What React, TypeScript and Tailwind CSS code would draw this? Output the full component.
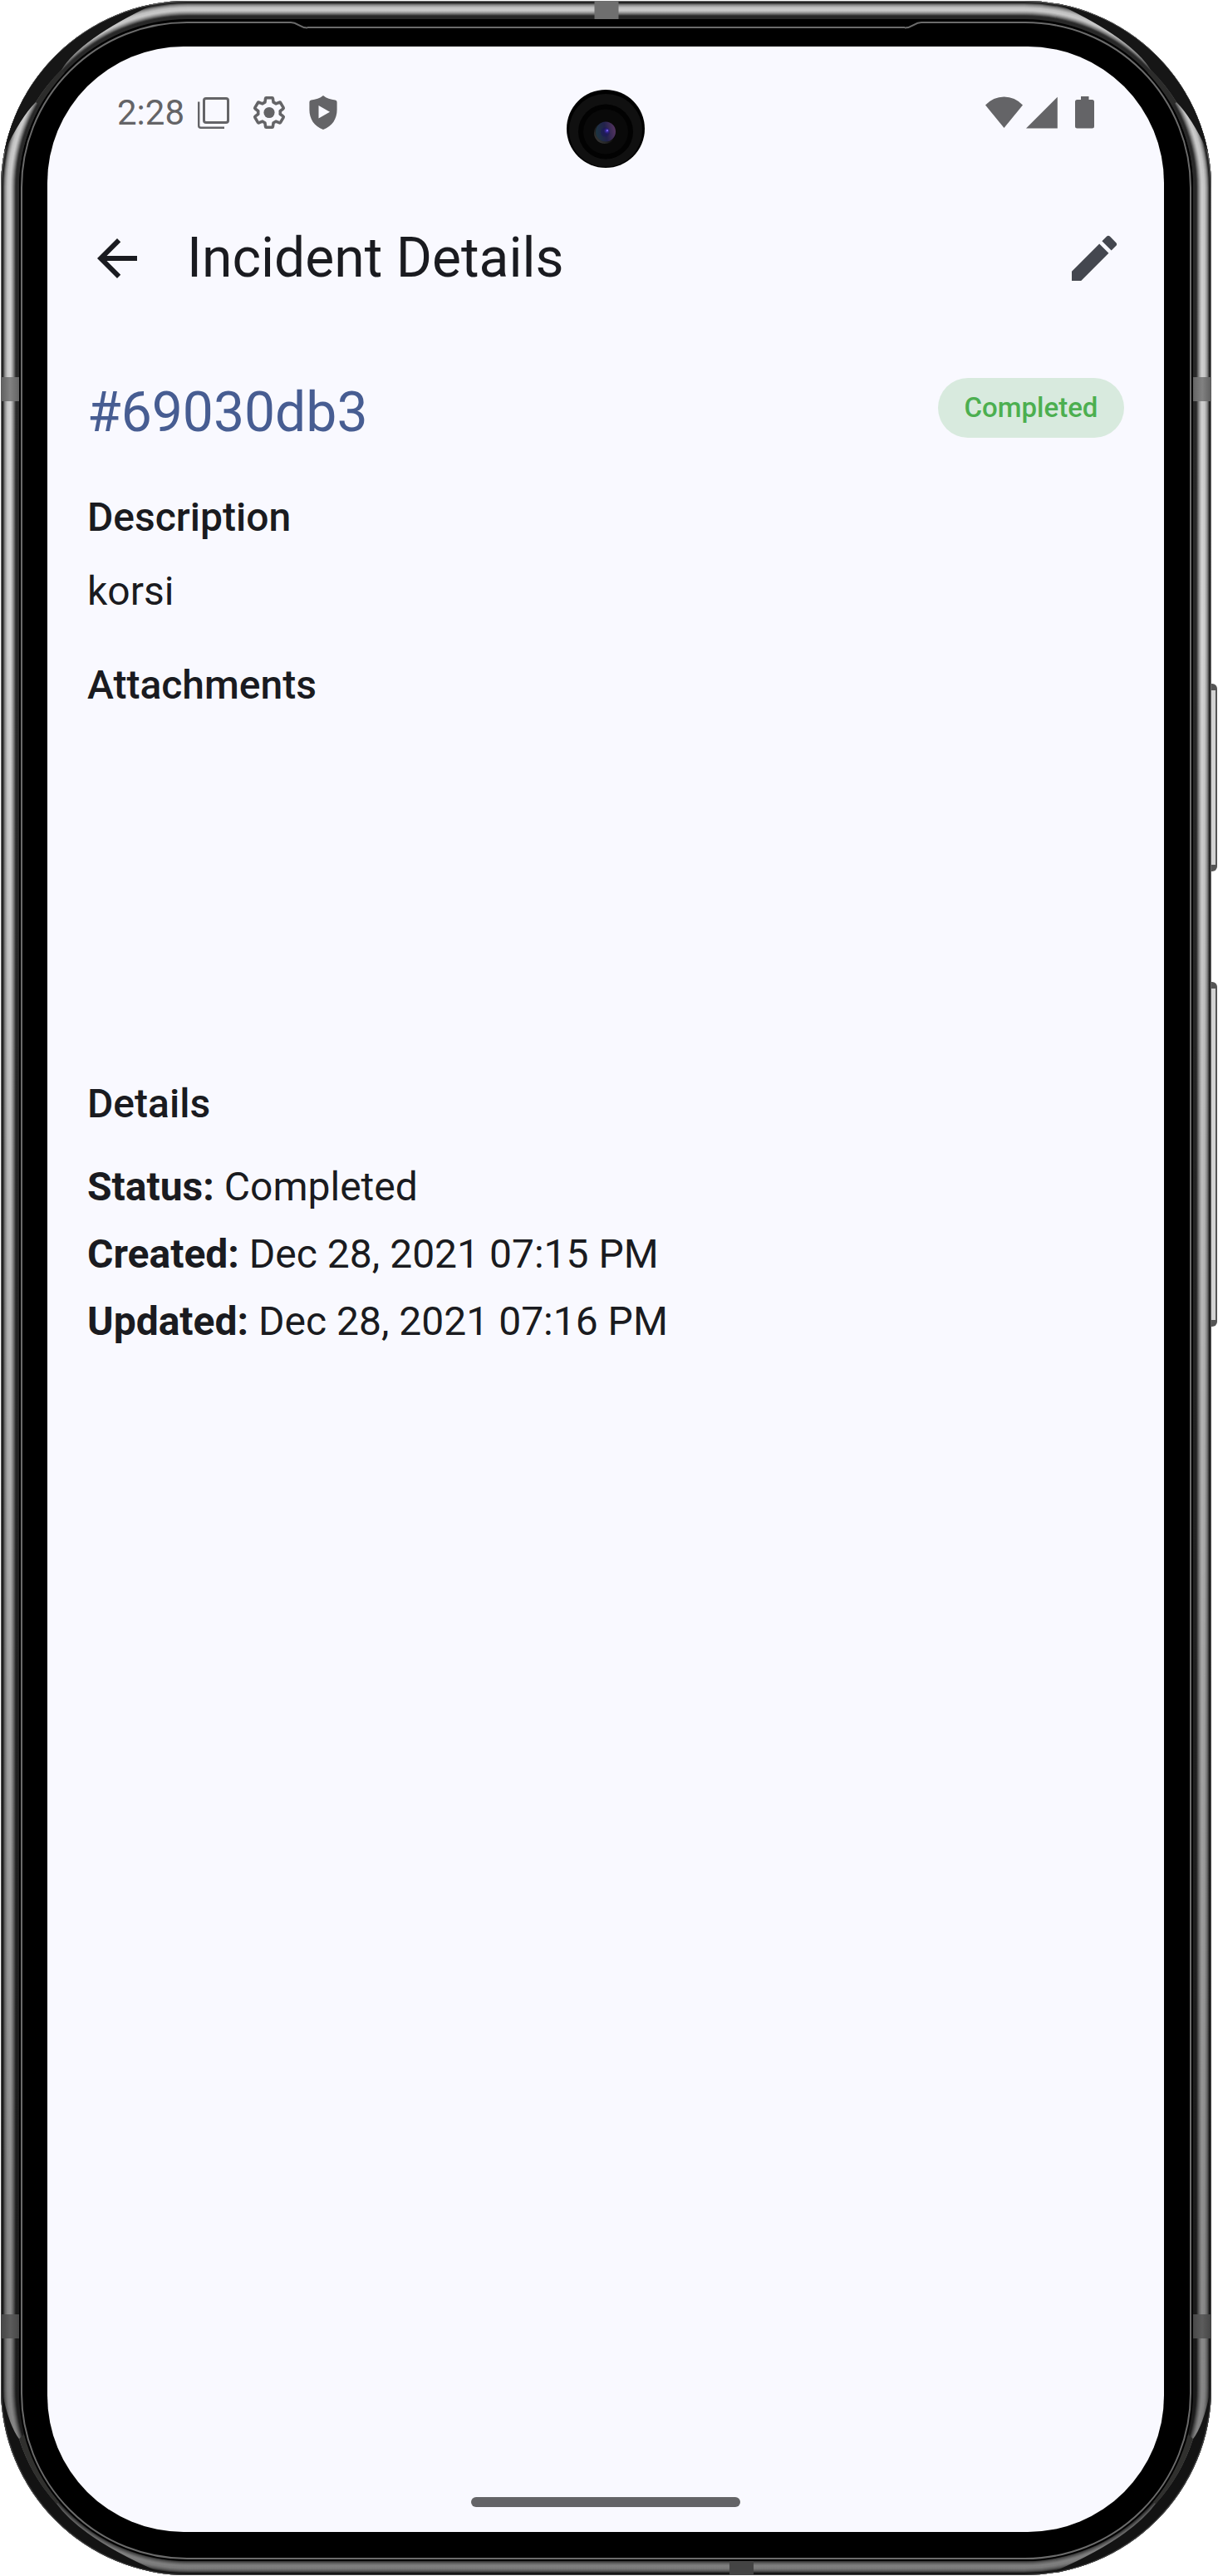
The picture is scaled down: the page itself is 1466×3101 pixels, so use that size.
import type { ReactNode } from "react";
import { MdArrowBack, MdEdit } from "react-icons/md";

const details = [
  { label: "Status:", value: "Completed" },
  { label: "Created:", value: "Dec 28, 2021 07:15 PM" },
  { label: "Updated:", value: "Dec 28, 2021 07:16 PM" },
];

function StackIcon() {
  return (
    <svg className="h-[38px] w-[38px]" viewBox="0 0 38 38" fill="none" stroke="currentColor" aria-hidden="true">
      <rect x="7.5" y="1.5" width="29" height="29" rx="2.5" strokeWidth="3" />
      <path d="M1.2 5.5V34.2Q1.2 36.8 3.8 36.8H32" strokeWidth="2.4" />
    </svg>
  );
}

function GearIcon() {
  return (
    <svg className="h-[39px] w-10" viewBox="1.2 1 21.6 22" fill="none" aria-hidden="true">
      <path
        stroke="currentColor"
        strokeWidth="2"
        strokeLinejoin="round"
        d="M19.43 12.98c.04-.32.07-.64.07-.98 0-.34-.03-.66-.07-.98l2.11-1.65c.19-.15.24-.42.12-.64l-2-3.46c-.09-.16-.26-.25-.44-.25-.06 0-.12.01-.17.03l-2.49 1c-.52-.4-1.08-.73-1.69-.98l-.38-2.65C14.46 2.18 14.25 2 14 2h-4c-.25 0-.46.18-.49.42l-.38 2.65c-.61.25-1.17.59-1.69.98l-2.49-1c-.06-.02-.12-.03-.18-.03-.17 0-.34.09-.43.25l-2 3.46c-.13.22-.07.49.12.64l2.11 1.65c-.04.32-.07.65-.07.98 0 .33.03.66.07.98l-2.11 1.65c-.19.15-.24.42-.12.64l2 3.46c.09.16.26.25.44.25.06 0 .12-.01.17-.03l2.49-1c.52.4 1.08.73 1.69.98l.38 2.65c.03.24.24.42.49.42h4c.25 0 .46-.18.49-.42l.38-2.65c.61-.25 1.17-.59 1.69-.98l2.49 1c.06.02.12.03.18.03.17 0 .34-.09.43-.25l2-3.46c.12-.22.07-.49-.12-.64l-2.11-1.65z"
      />
      <circle cx="12" cy="12" r="3.7" fill="currentColor" />
    </svg>
  );
}

function ShieldIcon() {
  return (
    <svg className="h-[41px] w-[34px]" viewBox="0 0 34 41" aria-hidden="true">
      <path
        fill="currentColor"
        fillRule="evenodd"
        d="M17 0C21 3.2 26 5 31.5 5.4Q33.6 5.8 33.6 8V17C33.6 28 28 37 17 41C6 37 .4 28 .4 17V8Q.4 5.8 2.5 5.4C8 5 13 3.2 17 0ZM11.5 12V27.5L25 19.7Z"
      />
    </svg>
  );
}

function StatusGlyphs() {
  return (
    <svg className="h-[39px] w-[131px]" viewBox="0 0 131 39" fill="currentColor" aria-hidden="true">
      <path d="M0 10.5Q9.5 .5 22.5 .5T45 10.5L22.5 38Z" />
      <path d="M49 38.5L86.8 .8V38.5Z" />
      <path d="M115 0H124.5V4H128.5Q131 4 131 6.5V36Q131 38.5 128.5 38.5H110.5Q108 38.5 108 36V6.5Q108 4 110.5 4H115Z" />
    </svg>
  );
}

function Camera() {
  return (
    <svg
      className="absolute left-1/2 top-[52px] h-[94px] w-[94px] -translate-x-1/2"
      viewBox="0 0 94 94"
      aria-hidden="true"
    >
      <defs>
        <linearGradient id="lens" x1="0" y1=".6" x2="1" y2=".4">
          <stop offset="0" stopColor="#1c3640" />
          <stop offset=".5" stopColor="#22224c" />
          <stop offset="1" stopColor="#553460" />
        </linearGradient>
        <radialGradient id="glow">
          <stop offset="0" stopColor="#5a3fe0" />
          <stop offset="1" stopColor="#2a1a9a" stopOpacity="0" />
        </radialGradient>
        <linearGradient id="rim" x1="1" y1="0" x2="0" y2="1">
          <stop offset=".4" stopColor="#050505" />
          <stop offset="1" stopColor="#444" />
        </linearGradient>
      </defs>
      <circle cx="47" cy="47" r="47" fill="#000" />
      <circle cx="47" cy="49" r="44" fill="#101010" />
      <circle cx="47" cy="50.5" r="33" fill="#020202" />
      <circle cx="47" cy="50.5" r="27" fill="#090909" />
      <circle cx="46" cy="52" r="13" fill="url(#rim)" />
      <circle cx="47" cy="50.5" r="12" fill="url(#lens)" />
      <circle cx="46.5" cy="51" r="5.5" fill="#1b1560" opacity=".45" />
      <circle cx="48.5" cy="49.5" r="4" fill="url(#glow)" />
      <circle cx="49" cy="49" r="1" fill="#7f6bf0" />
    </svg>
  );
}

function CornerTop({ className }: { className: string }) {
  return (
    <svg className={className} viewBox="0 0 226 226" aria-hidden="true">
      <path d="M4 182Q24 140 42 122A208 208 0 0 1 73 83Q96 46 182 5A225 225 0 0 0 4 182Z" fill="#161616" />
      <path d="M42 122A208 208 0 0 1 73 83L78 88A202 202 0 0 0 47 126Z" fill="#2c2c2b" />
    </svg>
  );
}

function CornerBottom({ className }: { className: string }) {
  return (
    <svg className={className} viewBox="0 0 226 226" aria-hidden="true">
      <path d="M2 218Q10 180 22 164A210 210 0 0 1 67 86Q98 44 190 4A225 225 0 0 0 2 218Z" fill="#131313" />
      <path d="M22 164A210 210 0 0 1 67 86L73 90A202 202 0 0 0 28 170Z" fill="#30302e" />
    </svg>
  );
}

function SpeakerSlot() {
  return (
    <div className="absolute inset-x-[323px] -top-0.5 flex h-[10px]" aria-hidden="true">
      <svg className="h-[10px] w-5" viewBox="0 0 20 10">
        <rect width="20" height="10" fill="#000" />
        <path d="M0 1C9 1 10 7.5 20 7.5" fill="none" stroke="#6b6b6b" strokeWidth="2" />
      </svg>
      <div className="flex flex-1 flex-col justify-end bg-black pb-0.5">
        <div className="h-0.5 bg-[#6b6b6b]" />
      </div>
      <svg className="h-[10px] w-5 -scale-x-100" viewBox="0 0 20 10">
        <rect width="20" height="10" fill="#000" />
        <path d="M0 1C9 1 10 7.5 20 7.5" fill="none" stroke="#6b6b6b" strokeWidth="2" />
      </svg>
    </div>
  );
}

function DeviceFrame({ children }: { children: ReactNode }) {
  return (
    <div className="relative mr-2 ml-px flex flex-1 flex-col rounded-[225px] bg-black px-6 pt-[25px] pb-[19px] shadow-[inset_0_0_0_1px_#6b6b6b,inset_0_0_0_3px_#262626,inset_0_0_0_4px_#555,inset_0_0_0_5px_#7c7c7c,inset_0_0_0_6px_#989898,inset_0_0_0_7px_#adadad,inset_0_0_0_8px_#bebebe,inset_0_0_0_10px_#cdcdcd,inset_0_0_0_12px_#d2d2d2,inset_0_0_0_13px_#c4c4c4,inset_0_0_0_14px_#b0b0b0,inset_0_0_0_15px_#989898,inset_0_0_0_16px_#7c7c7c,inset_0_0_0_17px_#5e5e5e,inset_0_0_0_18px_#3c3c3c,inset_0_0_0_22px_#2a2a2a]">
      <div
        className="absolute inset-0 rounded-[225px] bg-linear-to-b from-black/5 from-0% via-transparent via-25% to-black/40 to-100%"
        aria-hidden="true"
      />
      <CornerTop className="absolute left-0 top-0 h-[226px] w-[226px]" />
      <CornerTop className="absolute right-0 top-0 h-[226px] w-[226px] -scale-x-100" />
      <CornerBottom className="absolute bottom-0 left-0 h-[226px] w-[226px] -scale-y-100" />
      <CornerBottom className="absolute bottom-0 right-0 h-[226px] w-[226px] -scale-100" />

      <div className="absolute left-1/2 top-0 h-[22px] w-[29px] -translate-x-1/2 bg-[#6f6f6f]" />
      <div className="absolute left-0 top-[453px] h-[29px] w-[22px] bg-linear-to-r from-[#5e5e5e] via-[#828282] to-[#646464]" />
      <div className="absolute right-0 top-[453px] h-[29px] w-[22px] bg-linear-to-l from-[#5e5e5e] via-[#828282] to-[#646464]" />
      <div className="absolute bottom-[285px] left-0 h-[29px] w-[22px] bg-linear-to-r from-[#444] via-[#5c5c5c] to-[#484848]" />
      <div className="absolute bottom-[285px] right-0 h-[29px] w-[22px] bg-linear-to-l from-[#444] via-[#5c5c5c] to-[#484848]" />
      <div className="absolute bottom-0 left-[877px] h-[17px] w-[29px] bg-[#444]" />

      <div className="absolute left-full top-[822px] h-[226px] w-[7px] rounded-r-md border-y-8 border-r-2 border-[#555] bg-[#d3d3d3]" />
      <div className="absolute left-full top-[1181px] h-[415px] w-[7px] rounded-r-md border-y-8 border-r-2 border-[#555] bg-[#d3d3d3]" />

      <div className="relative flex flex-1 flex-col rounded-[200px] border-2 border-[#6b6b6b] bg-black pt-7 pr-[31px] pb-[31px] pl-[30px] shadow-[0_0_0_2px_#000]">
        <SpeakerSlot />
        {children}
      </div>
    </div>
  );
}

export default function App() {
  return (
    <div className="flex min-h-screen flex-col bg-white py-px font-[Roboto,sans-serif] text-[#1a1b20]">
      <DeviceFrame>
        <div className="relative flex flex-1 flex-col rounded-[164px] bg-[#f9f9ff]">
          <div className="flex h-[159px] items-center justify-between px-21 text-[#646467]">
            <div className="flex items-center gap-7">
              <div className="flex items-center gap-4">
                <time className="text-[42px] leading-none">2:28</time>
                <StackIcon />
              </div>
              <GearIcon />
              <ShieldIcon />
            </div>
            <StatusGlyphs />
          </div>
          <Camera />

          <header className="flex h-48 items-center gap-12 px-12">
            <button type="button" aria-label="Back">
              <MdArrowBack className="h-18 w-18" />
            </button>
            <h1 className="flex-1 text-[66px] leading-[84px]">Incident Details</h1>
            <button type="button" aria-label="Edit incident" className="text-[#44474f]">
              <MdEdit className="h-18 w-18" />
            </button>
          </header>

          <main className="flex flex-1 flex-col px-12 pt-12 text-[48px] leading-[72px]">
            <div className="flex items-start justify-between">
              <h2 className="text-[66px] leading-[84px] text-[#475d92]">#69030db3</h2>
              <span className="min-w-56 rounded-full bg-[#d8eade] px-6 py-3 text-center text-[33px] leading-[48px] font-medium text-[#4caf50]">
                Completed
              </span>
            </div>

            <section className="mt-12">
              <h3 className="font-medium">Description</h3>
              <p className="mt-[17px]">korsi</p>
            </section>

            <section className="mt-[41px] min-h-[504px]">
              <h3 className="font-medium">Attachments</h3>
            </section>

            <section>
              <h3 className="font-medium">Details</h3>
              <dl className="mt-7 flex flex-col gap-[9px]">
                {details.map((item) => (
                  <div key={item.label} className="flex gap-3">
                    <dt className="font-bold">{item.label}</dt>
                    <dd>{item.value}</dd>
                  </div>
                ))}
              </dl>
            </section>
          </main>

          <div className="flex justify-center pb-[30px]">
            <div className="h-3 w-81 rounded-full bg-[#646467]" />
          </div>
        </div>
      </DeviceFrame>
    </div>
  );
}
